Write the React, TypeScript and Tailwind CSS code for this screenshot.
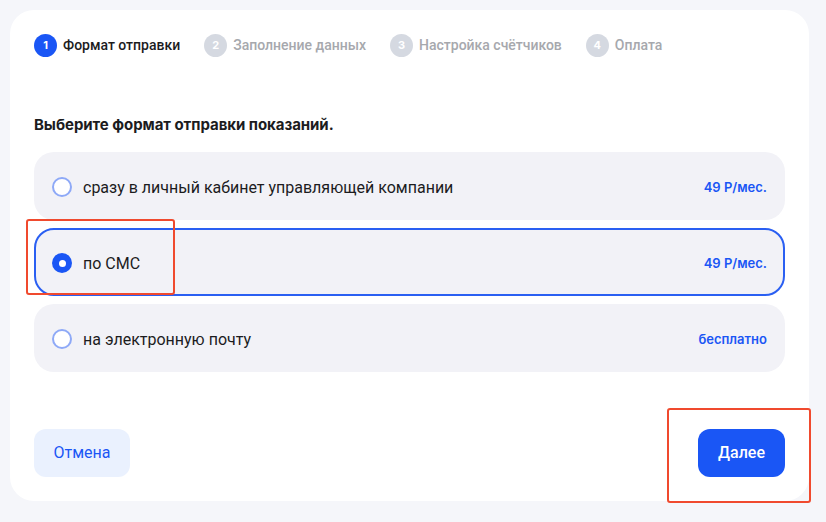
import React from "react";

const steps = [
  { n: 1, label: "Формат отправки", active: true },
  { n: 2, label: "Заполнение данных", active: false },
  { n: 3, label: "Настройка счётчиков", active: false },
  { n: 4, label: "Оплата", active: false },
];

const options = [
  { label: "сразу в личный кабинет управляющей компании", price: "49 Р/мес.", selected: false },
  { label: "по СМС", price: "49 Р/мес.", selected: true },
  { label: "на электронную почту", price: "бесплатно", selected: false },
];

const roboto = { fontFamily: "Roboto, 'Noto Sans', sans-serif" };

export default function App() {
  return (
    <div
      className="w-[826px] h-[522px] bg-[#f5f6fa] pt-[10px] pl-[10px] overflow-hidden"
      style={{ fontFamily: "Inter, 'Noto Sans', sans-serif" }}
    >
      <div className="relative w-[799px] h-[491px] bg-white rounded-[24px] px-[24px] pt-[23px] flex flex-col">
        <div className="flex items-center h-[24px]">
          {steps.map((s) => (
            <div key={s.n} className="flex items-center mr-[24px]">
              <div
                className={
                  s.active
                    ? "w-[23px] h-[23px] rounded-full bg-[#1a56f5] text-white text-[11px] font-bold flex items-center justify-center"
                    : "w-[23px] h-[23px] rounded-full bg-[#d5d9e1] text-white text-[11px] font-bold flex items-center justify-center"
                }
              >
                {s.n}
              </div>
              <span
                style={roboto}
                className={
                  s.active
                    ? "ml-[6px] text-[14px] font-medium text-[#1c1c1e]"
                    : "ml-[6px] text-[14px] font-medium text-[#a6a8ad]"
                }
              >
                {s.label}
              </span>
            </div>
          ))}
        </div>

        <h2 className="mt-[58px] text-[15px] font-bold text-[#1c1c1e] leading-[20px] tracking-[-0.05px]">
          Выберите формат отправки показаний.
        </h2>

        <div className="mt-[17px] flex flex-col gap-[8px] w-[751px]">
          {options.map((o) => (
            <div
              key={o.label}
              className={
                o.selected
                  ? "h-[68px] rounded-[20px] bg-[#f2f2f7] border-2 border-[#2a5ff2] flex items-center pl-[16px] pr-[16px] pt-[2px]"
                  : "h-[68px] rounded-[20px] bg-[#f2f2f7] border-2 border-transparent flex items-center pl-[16px] pr-[16px] pt-[2px]"
              }
            >
              {o.selected ? (
                <div className="w-[20px] h-[20px] rounded-full bg-[#1a56f5] flex items-center justify-center">
                  <div className="w-[7px] h-[7px] rounded-full bg-white" />
                </div>
              ) : (
                <div className="w-[20px] h-[20px] rounded-full border-2 border-[#8ea9f7] bg-white" />
              )}
              <span style={roboto} className="ml-[11px] text-[16px] text-[#1c1c1e] pt-[2px]">
                {o.label}
              </span>
              <span className="ml-auto text-[13px] font-semibold text-[#1a56f5] pt-[1px]">{o.price}</span>
            </div>
          ))}
        </div>

        <div className="mt-auto mb-[24px] flex justify-between w-[751px]">
          <button style={roboto} className="w-[96px] h-[48px] rounded-[12px] bg-[#eaf1fe] text-[#1a56f5] text-[16px]">
            Отмена
          </button>
          <button style={roboto} className="w-[87px] h-[48px] rounded-[12px] bg-[#1a56f5] text-white text-[16px] font-medium">
            Далее
          </button>
        </div>

        <div className="absolute left-[16px] top-[209px] w-[149px] h-[76px] border-2 border-[#f04a2e] rounded-[3px] pointer-events-none" />
        <div className="absolute left-[657px] top-[398px] w-[144px] h-[95px] border-2 border-[#f04a2e] rounded-[3px] pointer-events-none" />
      </div>
    </div>
  );
}
